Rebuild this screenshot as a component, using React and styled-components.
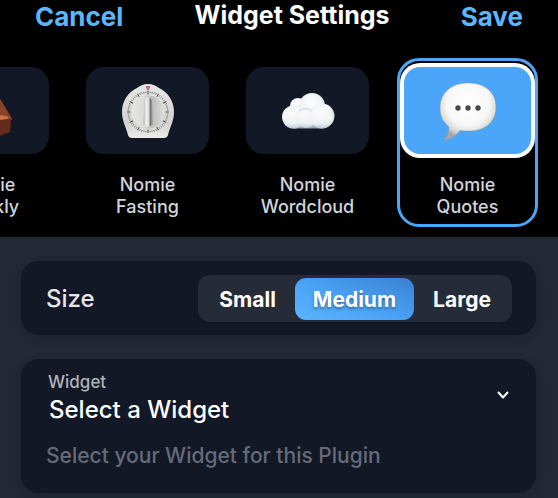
import React, { useState } from "react";
import styled, { createGlobalStyle, css } from "styled-components";

const GlobalStyle = createGlobalStyle`
  * { box-sizing: border-box; }
  body {
    margin: 0;
    background: #222835;
    color: #fff;
    font-family: Inter, "Liberation Sans", sans-serif;
  }
  button, select { font-family: inherit; color: inherit; }
`;

const Page = styled.main`
  overflow: hidden;
`;

const Top = styled.div`
  background: #000;
  padding-bottom: 10px;
`;

const Header = styled.header`
  display: flex;
  align-items: flex-start;
  justify-content: space-between;
  padding: 0 35px;
  height: 58px;
`;

const HeaderButton = styled.button`
  border: 0;
  padding: 0;
  background: none;
  color: #5cb6fb;
  font-size: 26px;
  font-weight: 700;
  line-height: 34px;
  cursor: pointer;
`;

const Title = styled.h1`
  margin: 0;
  font-size: 25px;
  font-weight: 700;
  line-height: 30px;
  white-space: nowrap;
`;

const Strip = styled.div`
  display: flex;
  justify-content: flex-end;
  gap: 19px;
  padding-right: 20px;
  overflow: hidden;
`;

const Plugin = styled.button`
  flex: 0 0 141px;
  display: flex;
  flex-direction: column;
  align-items: stretch;
  gap: 20px;
  padding: 6px ${(p) => (p.$active ? 4 : 6)}px;
  border: 3px solid ${(p) => (p.$active ? "#4ba5f8" : "transparent")};
  border-radius: 22px;
  background: none;
  cursor: pointer;
`;

const Tile = styled.span`
  display: flex;
  align-items: center;
  justify-content: center;
  height: 87px;
  border-radius: 18px;
  background: #121826;
  ${(p) =>
    p.$active &&
    css`
      background: #4ba5f8;
      border-radius: 16px;
      box-shadow: 0 0 0 4px #fff;
    `}
`;

const PluginName = styled.span`
  align-self: center;
  width: 100px;
  color: #d2d5db;
  font-size: 18px;
  font-weight: 500;
  line-height: 22px;
  text-align: center;
`;

const Settings = styled.section`
  display: grid;
  gap: 24px;
  padding: 24px 22px 5px 21px;
`;

const Card = styled.div`
  border-radius: 18px;
  background: #121826;
  box-shadow: 0 3px 10px rgba(18, 24, 38, 0.25);
`;

const SizeCard = styled(Card)`
  display: flex;
  align-items: center;
  justify-content: space-between;
  padding: 14px 24px 13px 25px;
`;

const SizeLabel = styled.span`
  color: #e4e6ea;
  font-size: 24px;
  font-weight: 500;
  line-height: 32px;
`;

const Segments = styled.div`
  display: flex;
  gap: 1px;
  padding: 3px 3px 2px;
  border-radius: 12px;
  background: #262b38;
`;

const Segment = styled.button`
  height: 42px;
  padding: 0 18px;
  border: 0;
  border-radius: 11px;
  background: none;
  font-size: 21px;
  font-weight: 700;
  cursor: pointer;
  ${(p) =>
    p.$active &&
    css`
      background: linear-gradient(200deg, #3a80cf 0%, #4aa3f7 55%, #5ab5fc 100%);
      text-shadow: 0 2px 3px rgba(0, 0, 0, 0.35);
    `}
`;

const WidgetCard = styled(Card)`
  padding: 12px 25px 22px;
`;

const Field = styled.div`
  display: grid;
  grid-template-columns: 1fr auto;
  align-items: start;
  padding-left: 2px;
`;

const FieldLabel = styled.label`
  display: block;
  color: #b1b3b8;
  font-size: 17px;
  font-weight: 500;
  line-height: 22px;
`;

const Select = styled.select`
  display: block;
  width: 100%;
  height: 34px;
  padding: 0 0 0 1px;
  border: 0;
  background: transparent;
  font-size: 24px;
  font-weight: 500;
  line-height: 34px;
  appearance: none;
`;

const Help = styled.p`
  margin: 14px 0 0;
  color: #666b79;
  font-size: 21px;
  font-weight: 500;
  line-height: 30px;
`;

const Chevron = () => (
  <svg width="16" height="48" viewBox="0 0 16 48" fill="none" aria-hidden="true">
    <path d="M3.500 21.500 8 26.500 12.500 21.500" stroke="#fff" strokeWidth="2" strokeLinecap="round" strokeLinejoin="round" />
  </svg>
);

const Brick = () => (
  <svg width="58" height="58" viewBox="0 0 58 58" aria-hidden="true">
    <path d="M2 34 28 6 37 10 53 37 51 40V50L30 57 4 48Z" fill="#5d2b1f" />
    <path d="M28 6 37 10 53 37 50 40 42 34Z" fill="#8a4029" />
    <path d="M30 36 42 33 50 35 48 37 40 38 30 41Z" fill="#cb7048" />
    <path d="M40 39 52 37 51 50 40 54Z" fill="#662a1a" />
  </svg>
);

const ticks = Array.from({ length: 60 }, (_, i) => i);

const Timer = () => (
  <svg width="54" height="56" viewBox="0 0 54 56" aria-hidden="true">
    <defs>
      <linearGradient id="timerBody" x1="0" y1="0" x2="0" y2="1">
        <stop offset="0" stopColor="#e6e6e5" />
        <stop offset="0.75" stopColor="#d2d2d1" />
        <stop offset="1" stopColor="#ececea" />
      </linearGradient>
      <linearGradient id="timerDial" x1="0" y1="0" x2="1" y2="0">
        <stop offset="0" stopColor="#e6e6e5" />
        <stop offset="0.4" stopColor="#d8d8d7" />
        <stop offset="0.62" stopColor="#bcbcbc" />
        <stop offset="1" stopColor="#dededd" />
      </linearGradient>
      <linearGradient id="timerKnob" x1="0" y1="0" x2="1" y2="0">
        <stop offset="0" stopColor="#aaaaaa" />
        <stop offset="0.25" stopColor="#f2f2f1" />
        <stop offset="0.55" stopColor="#dcdcdb" />
        <stop offset="0.72" stopColor="#777" />
        <stop offset="1" stopColor="#a9a9a9" />
      </linearGradient>
    </defs>
    <path
      d="M27 1C32 1 35 3 38 5 47 9 53 18 53 29 53 38 49 44 47 52Q46 55 43 55H11Q8 55 7 52C5 44 1 38 1 29 1 18 7 9 16 5 19 3 22 1 27 1Z"
      fill="url(#timerBody)"
    />
    {ticks.map((i) => (
      <path
        key={i}
        d={i % 5 === 0 ? "M27 8V11.500" : "M27 8.500V10"}
        stroke="#4a4a4a"
        strokeWidth={i % 5 === 0 ? 1 : 0.7}
        transform={`rotate(${i * 6} 27 29)`}
      />
    ))}
    <circle cx="27" cy="29" r="16.500" fill="url(#timerDial)" />
    <path d="M23.500 17Q27 12 31 17L32 41Q27 46 22.500 41Z" fill="url(#timerKnob)" />
    <path d="M25 3.500H29L27 7.500Z" fill="#c98080" stroke="#b95a5a" strokeWidth="0.8" />
  </svg>
);

const Cloud = () => (
  <svg width="54" height="38" viewBox="0 0 54 38" aria-hidden="true">
    <defs>
      <radialGradient id="cloudPuff" cx="0.45" cy="0.4" r="0.62">
        <stop offset="0" stopColor="#fdfdfe" />
        <stop offset="0.65" stopColor="#f0f2f5" />
        <stop offset="1" stopColor="#cbd3dc" />
      </radialGradient>
      <linearGradient id="cloudBase" x1="0" y1="0" x2="0" y2="1">
        <stop offset="0" stopColor="#f8f9fb" />
        <stop offset="0.7" stopColor="#eef1f4" />
        <stop offset="1" stopColor="#b8c4d0" />
      </linearGradient>
    </defs>
    <circle cx="17" cy="14" r="8" fill="url(#cloudPuff)" />
    <circle cx="31" cy="14" r="13" fill="url(#cloudPuff)" />
    <circle cx="12.5" cy="25" r="11.5" fill="url(#cloudPuff)" />
    <circle cx="25" cy="26" r="10" fill="url(#cloudPuff)" />
    <circle cx="41" cy="24" r="12.5" fill="url(#cloudPuff)" />
    <path d="M3 26Q12 19 26 22 40 15 52 26 50 36 41 36.500H12.500Q4 35 3 26Z" fill="url(#cloudBase)" opacity="0.8" />
    <path d="M18 19Q25 14 31 19" fill="none" stroke="#ccd3db" strokeWidth="1" />
  </svg>
);

const Bubble = () => (
  <svg width="58" height="58" viewBox="0 0 58 58" aria-hidden="true">
    <defs>
      <radialGradient id="bubbleFill" cx="0.5" cy="0.36" r="0.62">
        <stop offset="0" stopColor="#fff" />
        <stop offset="0.62" stopColor="#f7f7f7" />
        <stop offset="0.85" stopColor="#d9d9d9" />
        <stop offset="1" stopColor="#a7a7a7" />
      </radialGradient>
    </defs>
    <path
      d="M29 1C47 1 57 11 57 25 57 41 45 49 30 49 26 49 23 49 21 48.500 17 54 10 58 6 58 4 58 5 57 6 56 9 53 10 49 10 45 4 40 1 34 1 26 1 11 12 1 29 1Z"
      fill="url(#bubbleFill)"
      stroke="#969ca0"
      strokeWidth="0.6"
    />
    {[19, 29, 39].map((x) => (
      <circle key={x} cx={x} cy="26" r="2.700" fill="#484848" />
    ))}
  </svg>
);

const plugins = [
  { name: "Nomie Weekly", Icon: Brick },
  { name: "Nomie Fasting", Icon: Timer },
  { name: "Nomie Wordcloud", Icon: Cloud },
  { name: "Nomie Quotes", Icon: Bubble },
];

const sizes = ["Small", "Medium", "Large"];

export default function App() {
  const [plugin, setPlugin] = useState("Nomie Quotes");
  const [size, setSize] = useState("Medium");

  return (
    <>
      <GlobalStyle />
      <Page>
        <Top>
          <Header>
            <HeaderButton type="button">Cancel</HeaderButton>
            <Title>Widget Settings</Title>
            <HeaderButton type="button">Save</HeaderButton>
          </Header>
          <Strip>
            {plugins.map(({ name, Icon }) => (
              <Plugin
                key={name}
                type="button"
                aria-pressed={plugin === name}
                $active={plugin === name}
                onClick={() => setPlugin(name)}
              >
                <Tile $active={plugin === name}>
                  <Icon />
                </Tile>
                <PluginName>{name}</PluginName>
              </Plugin>
            ))}
          </Strip>
        </Top>
        <Settings>
          <SizeCard>
            <SizeLabel id="size-label">Size</SizeLabel>
            <Segments role="group" aria-labelledby="size-label">
              {sizes.map((s) => (
                <Segment
                  key={s}
                  type="button"
                  aria-pressed={size === s}
                  $active={size === s}
                  onClick={() => setSize(s)}
                >
                  {s}
                </Segment>
              ))}
            </Segments>
          </SizeCard>
          <WidgetCard>
            <Field>
              <div>
                <FieldLabel htmlFor="widget">Widget</FieldLabel>
                <Select id="widget" aria-describedby="widget-help">
                  <option>Select a Widget</option>
                </Select>
              </div>
              <Chevron />
            </Field>
            <Help id="widget-help">Select your Widget for this Plugin</Help>
          </WidgetCard>
        </Settings>
      </Page>
    </>
  );
}
